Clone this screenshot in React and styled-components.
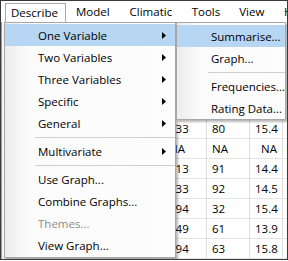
import React from "react";
import styled, { createGlobalStyle } from "styled-components";

const GlobalStyle = createGlobalStyle`
  body {
    margin: 0;
    background: #ffffff;
    font-family: "Open Sans", "Liberation Sans", sans-serif;
  }
`;

const Frame = styled.div`
  position: relative;
  width: 288px;
  height: 260px;
  box-sizing: border-box;
  border: 1px solid #3a3a3a;
  background: #ffffff;
  overflow: hidden;
  display: flex;
  flex-direction: column;
  font-size: 11.5px;
  color: #000;
`;

const MenuBar = styled.div`
  height: 21px;
  display: flex;
  align-items: flex-end;
  background: #ffffff;
`;

const BarItem = styled.div`
  height: 19px;
  line-height: 18px;
  padding: 0 ${(p) => p.$pad || 10}px;
  white-space: nowrap;
  ${(p) =>
    p.$open &&
    `
    margin-left: 4px;
    padding: 0 7px 0 5px;
    border: 1px solid #a9a9a9;
    border-bottom: none;
    height: 18px;
    background: #ffffff;
  `}
`;

const Sheet = styled.div`
  flex: 1;
  display: grid;
  grid-template-columns: 163px 43px 43px 33px 1fr;
  grid-auto-rows: 20px;
  grid-template-rows: 17px;
  align-content: start;
`;

const Cell = styled.div`
  box-sizing: border-box;
  border-right: 1px solid #dedede;
  border-bottom: 1px solid #e4e4e4;
  padding: 0 5px;
  line-height: 19px;
  white-space: nowrap;
  overflow: hidden;
  text-align: ${(p) => (p.$right ? "right" : "left")};
  ${(p) => p.$side && `background: #f4f4f4; border-left: 1px solid #9a9a9a;`}
`;

const Menu = styled.div`
  position: absolute;
  left: ${(p) => p.$left}px;
  top: 21px;
  width: ${(p) => p.$width}px;
  box-sizing: border-box;
  border: 1px solid #a7a7a7;
  padding: ${(p) => p.$pad};
  background: linear-gradient(to right, #ececec 0px, #fbfbfb 22px, #fdfdfd 100%);
  box-shadow: 2px 2px 2px rgba(0, 0, 0, 0.28);
`;

const Item = styled.div`
  height: 22px;
  display: flex;
  align-items: center;
  justify-content: space-between;
  padding: 0 9px 0 ${(p) => p.$indent}px;
  white-space: nowrap;
  background: ${(p) => (p.$active ? "#b6d6f3" : "transparent")};
  color: ${(p) => (p.$disabled ? "#8c8c8c" : "#000")};
`;

const Separator = styled.div`
  height: 6px;
  display: flex;
  align-items: center;
  padding-left: ${(p) => p.$indent}px;
  &::after {
    content: "";
    flex: 1;
    height: 1px;
    background: #cfcfcf;
  }
`;

const Arrow = () => (
  <svg width="4" height="7" viewBox="0 0 4 7">
    <polygon points="0,0 4,3.5 0,7" fill="#000" />
  </svg>
);

const mainItems = [
  { label: "One Variable", sub: true, active: true },
  { label: "Two Variables", sub: true },
  { label: "Three Variables", sub: true },
  { label: "Specific", sub: true },
  { label: "General", sub: true },
  { sep: true },
  { label: "Multivariate", sub: true },
  { sep: true },
  { label: "Use Graph..." },
  { label: "Combine Graphs..." },
  { label: "Themes...", disabled: true },
  { label: "View Graph..." },
];

const subItems = [
  { label: "Summarise...", active: true },
  { label: "Graph..." },
  { sep: true },
  { label: "Frequencies..." },
  { label: "Rating Data..." },
];

const rows = [
  ["", "", "", ""],
  ["", "", "", ""],
  ["", "", "", ""],
  ["", "", "", ""],
  ["233", "80", "15.4"],
  ["NA", "NA", "NA"],
  ["113", "91", "14.4"],
  ["133", "92", "14.5"],
  ["194", "32", "15.4"],
  ["149", "61", "13.9"],
  ["194", "63", "15.8"],
];

const MenuList = ({ items, indent }) =>
  items.map((it, i) =>
    it.sep ? (
      <Separator key={i} $indent={indent - 3} />
    ) : (
      <Item key={i} $indent={indent} $active={it.active} $disabled={it.disabled}>
        <span>{it.label}</span>
        {it.sub && <Arrow />}
      </Item>
    )
  );

export default function App() {
  return (
    <>
      <GlobalStyle />
      <Frame>
        <MenuBar>
          <BarItem $open>Describe</BarItem>
          <BarItem>Model</BarItem>
          <BarItem>Climatic</BarItem>
          <BarItem $pad={9.5}>Tools</BarItem>
          <BarItem $pad={9.5}>View</BarItem>
          <BarItem>Help</BarItem>
        </MenuBar>
        <Sheet>
          <Cell $side />
          <Cell />
          <Cell />
          <Cell />
          <Cell />
          {rows.map((r, i) => (
            <React.Fragment key={i}>
              <Cell $side />
              <Cell>{r[0]}</Cell>
              <Cell>{r[1]}</Cell>
              <Cell $right>{r[2]}</Cell>
              <Cell />
            </React.Fragment>
          ))}
        </Sheet>
        <Menu $left={3} $width={172} $pad="1px 0">
          <MenuList items={mainItems} indent={33} />
        </Menu>
        <Menu $left={175} $width={110} $pad="2px 0 0">
          <MenuList items={subItems} indent={34} />
        </Menu>
      </Frame>
    </>
  );
}
